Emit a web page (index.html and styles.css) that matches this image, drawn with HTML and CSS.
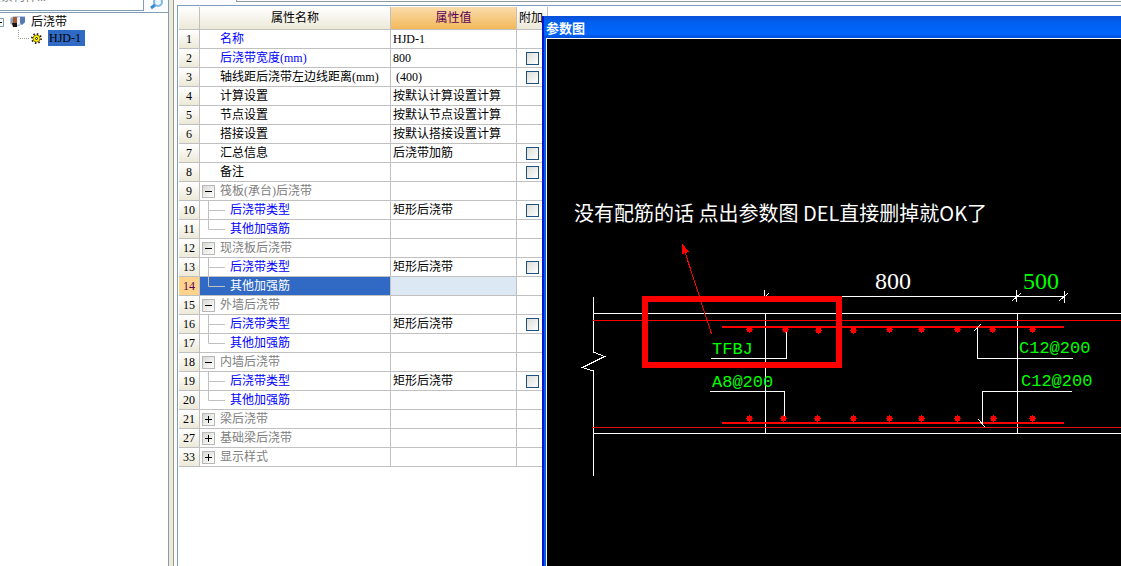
FILE: index.html
```html
<!DOCTYPE html>
<html lang="zh-CN">
<head>
<meta charset="utf-8">
<title>后浇带</title>
<link rel="stylesheet" href="styles.css">
</head>
<body>
<div class="app">
  <aside class="sidebar">
    <form class="search">
      <input class="search-box" type="text" aria-label="搜索构件" placeholder="搜索构件...">
      <button class="search-button" type="button" aria-label="搜索">
        <svg width="16" height="16" viewBox="0 0 16 16"><circle cx="10" cy="3" r="4" fill="#eaf5ff" stroke="#7db8e8" stroke-width="2"/><path d="M7 6L3 9" stroke="#3d8bd0" stroke-width="3"/></svg>
      </button>
    </form>
    <ul class="tree">
      <li class="tree-root">
        <svg width="4" height="9" viewBox="0 0 4 9"><path d="M0 .5H3.500V8.500H0" fill="#fff" stroke="#7f9db9"/><path d="M0 4.500H2" stroke="#000"/></svg>
        <svg class="folder" width="16" height="12" viewBox="0 0 16 12"><path d="M0 2L4 0H15V7L9 10L6 11L0 8Z" fill="#b9c6de"/><path d="M1 2L4 1V9L1 7Z" fill="#8fa0c4"/><path d="M3 1H7V8H3Z" fill="#a55a2c"/><path d="M7 2L10 1V8L7 9Z" fill="#f2f4fa"/><path d="M10 1H15V6L12 9L10 7Z" fill="#5878b4"/><path d="M2 7H7V11H3Z" fill="#1c1210"/></svg>
        <span>后浇带</span>
      </li>
      <li class="tree-leaf">
        <svg class="twig" width="11" height="19" viewBox="0 0 11 19"><path d="M.5 0V8.500H11" fill="none" stroke="#a8a48c" stroke-dasharray="1 1"/></svg>
        <svg class="gear" width="11" height="11" viewBox="0 0 11 11"><circle cx="5.500" cy="5.500" r="4.500" fill="none" stroke="#222" stroke-width="2" stroke-dasharray="1.500 2"/><circle cx="5.500" cy="5.500" r="3.500" fill="#ffee00" stroke="#8a7c00"/><circle cx="5.500" cy="5.500" r="1" fill="#fff" stroke="#222"/></svg>
        <span class="tree-selected">HJD-1</span>
      </li>
    </ul>
  </aside>
  <div class="splitter"></div>
  <main class="content">
    <div class="strip"></div>
    <section class="sheet">
      <table class="grid">
        <colgroup><col class="col-no"><col class="col-name"><col class="col-value"><col class="col-extra"></colgroup>
        <thead><tr><th></th><th>属性名称</th><th class="hot">属性值</th><th class="extra">附加</th></tr></thead>
        <tbody>
          <tr><th>1</th><td class="key blue">名称</td><td>HJD-1</td><td></td></tr>
          <tr><th>2</th><td class="key blue">后浇带宽度(mm)</td><td>800</td><td class="tick"><input type="checkbox" aria-label="后浇带宽度 附加"></td></tr>
          <tr><th>3</th><td class="key">轴线距后浇带左边线距离(mm)</td><td> (400)</td><td class="tick"><input type="checkbox" aria-label="左边线距离 附加"></td></tr>
          <tr><th>4</th><td class="key">计算设置</td><td>按默认计算设置计算</td><td></td></tr>
          <tr><th>5</th><td class="key">节点设置</td><td>按默认节点设置计算</td><td></td></tr>
          <tr><th>6</th><td class="key">搭接设置</td><td>按默认搭接设置计算</td><td></td></tr>
          <tr><th>7</th><td class="key">汇总信息</td><td>后浇带加筋</td><td class="tick"><input type="checkbox" aria-label="汇总信息 附加"></td></tr>
          <tr><th>8</th><td class="key">备注</td><td></td><td class="tick"><input type="checkbox" aria-label="备注 附加"></td></tr>
          <tr><th>9</th><td class="group"><div class="node"><button class="toggle" type="button" aria-label="折叠"></button><span>筏板(承台)后浇带</span></div></td><td></td><td></td></tr>
          <tr><th>10</th><td class="child"><div class="node"><svg width="17" height="18"><path d="M.5 0V18M0 9.500H17"/></svg><span>后浇带类型</span></div></td><td>矩形后浇带</td><td class="tick"><input type="checkbox" aria-label="筏板类型 附加"></td></tr>
          <tr><th>11</th><td class="child"><div class="node"><svg width="17" height="18"><path d="M.5 0V9.500H17"/></svg><span>其他加强筋</span></div></td><td></td><td></td></tr>
          <tr><th>12</th><td class="group"><div class="node"><button class="toggle" type="button" aria-label="折叠"></button><span>现浇板后浇带</span></div></td><td></td><td></td></tr>
          <tr><th>13</th><td class="child"><div class="node"><svg width="17" height="18"><path d="M.5 0V18M0 9.500H17"/></svg><span>后浇带类型</span></div></td><td>矩形后浇带</td><td class="tick"><input type="checkbox" aria-label="现浇板类型 附加"></td></tr>
          <tr class="selected"><th>14</th><td class="child"><div class="node"><svg width="17" height="18"><path d="M.5 0V9.500H17"/></svg><span>其他加强筋</span></div></td><td class="current"></td><td></td></tr>
          <tr><th>15</th><td class="group"><div class="node"><button class="toggle" type="button" aria-label="折叠"></button><span>外墙后浇带</span></div></td><td></td><td></td></tr>
          <tr><th>16</th><td class="child"><div class="node"><svg width="17" height="18"><path d="M.5 0V18M0 9.500H17"/></svg><span>后浇带类型</span></div></td><td>矩形后浇带</td><td class="tick"><input type="checkbox" aria-label="外墙类型 附加"></td></tr>
          <tr><th>17</th><td class="child"><div class="node"><svg width="17" height="18"><path d="M.5 0V9.500H17"/></svg><span>其他加强筋</span></div></td><td></td><td></td></tr>
          <tr><th>18</th><td class="group"><div class="node"><button class="toggle" type="button" aria-label="折叠"></button><span>内墙后浇带</span></div></td><td></td><td></td></tr>
          <tr><th>19</th><td class="child"><div class="node"><svg width="17" height="18"><path d="M.5 0V18M0 9.500H17"/></svg><span>后浇带类型</span></div></td><td>矩形后浇带</td><td class="tick"><input type="checkbox" aria-label="内墙类型 附加"></td></tr>
          <tr><th>20</th><td class="child"><div class="node"><svg width="17" height="18"><path d="M.5 0V9.500H17"/></svg><span>其他加强筋</span></div></td><td></td><td></td></tr>
          <tr><th>21</th><td class="group"><div class="node"><button class="toggle closed" type="button" aria-label="展开"></button><span>梁后浇带</span></div></td><td></td><td></td></tr>
          <tr><th>27</th><td class="group"><div class="node"><button class="toggle closed" type="button" aria-label="展开"></button><span>基础梁后浇带</span></div></td><td></td><td></td></tr>
          <tr><th>33</th><td class="group"><div class="node"><button class="toggle closed" type="button" aria-label="展开"></button><span>显示样式</span></div></td><td></td><td></td></tr>
        </tbody>
      </table>
    </section>
  </main>
  <section class="dialog">
    <h1 class="dialog-title">参数图</h1>
    <svg class="drawing" viewBox="547 39 574 527" preserveAspectRatio="xMinYMin slice">
      <defs>
        <path id="bar" d="M0 -3H1V-2H3V0H4V1H3V3H1V4H0V3H-2V1H-3V0H-2V-2H0Z" fill="#f00"/>
      </defs>
      <g class="white">
        <path d="M593.500 297V352L604.500 356.500L582.500 367.500L593.500 371V476"/>
        <path d="M594 313.500H1121M594 433.500H1121"/>
        <path d="M765.500 313V433M1017.500 313V433"/>
        <path d="M765 296.500H1064M764.500 290V300M765 297L769 293"/>
        <path d="M1016.500 290V302M1012 301L1021 293M1064.500 291V303M1059 301L1068 293"/>
      </g>
      <path d="M593 320.500H1121" stroke="#f00"/>
      <path d="M592 427.500H1121" stroke="#e01010"/>
      <path d="M722 327H1064M722 423H1064" stroke="#f00" stroke-width="2"/>
      <g>
        <use href="#bar" x="749" y="329"/><use href="#bar" x="785" y="329"/><use href="#bar" x="818" y="330"/><use href="#bar" x="853" y="330"/><use href="#bar" x="889" y="329"/><use href="#bar" x="921" y="329"/><use href="#bar" x="957" y="329"/><use href="#bar" x="992" y="329"/><use href="#bar" x="1032" y="329"/>
        <use href="#bar" x="749" y="418"/><use href="#bar" x="783" y="418"/><use href="#bar" x="817" y="418"/><use href="#bar" x="853" y="418"/><use href="#bar" x="889" y="418"/><use href="#bar" x="921" y="418"/><use href="#bar" x="957" y="418"/><use href="#bar" x="993" y="418"/><use href="#bar" x="1032" y="418"/>
      </g>
      <g class="white">
        <path d="M711 358.500H786.500V332M710 391.500H784.500V416"/>
        <path d="M1073 358.500H977.500V327M974 331L981 324"/>
        <path d="M1072 391.500H982.500V423M978 419L985 427"/>
      </g>
      <path d="M645 299H839V365H645Z" fill="none" stroke="#f00" stroke-width="6"/>
      <path d="M711.500 334L684 249" stroke="#f00"/>
      <path d="M682 243L689 252L682 254Z" fill="#f00"/>
      <text class="note" x="574" y="221">没有配筋的话 点出参数图 DEL直接删掉就OK了</text>
      <text class="size total" x="875" y="289">800</text>
      <text class="size" x="1023" y="289">500</text>
      <text class="tag" x="712" y="354">TFBJ</text>
      <text class="tag" x="712" y="387">A8@200</text>
      <text class="tag" x="1019" y="353">C12@200</text>
      <text class="tag" x="1021" y="386">C12@200</text>
    </svg>
  </section>
</div>
</body>
</html>
```

FILE: styles.css
```css
* { box-sizing: border-box; }

html, body { height: 100%; }

body {
  margin: 0;
  overflow: hidden;
  font: 12px/16px "Liberation Serif", "Noto Sans CJK SC", serif;
  color: #000;
  background: #fff;
}

.app {
  position: relative;
  display: flex;
  height: 100%;
}

.sidebar {
  display: flex;
  flex-direction: column;
  flex: none;
  width: 169px;
  border-right: 1px solid #7f9db9;
}

.search {
  display: flex;
  align-items: flex-end;
  flex: none;
  height: 11px;
  overflow: hidden;
  background: #fcfcfe;
}

.search-box {
  width: 156px;
  height: 24px;
  margin-left: -12px;
  padding: 0 0 4px;
  border: 1px solid #7f9db9;
  font: inherit;
}

.search-box::placeholder { color: #808080; }

.search-button {
  display: flex;
  height: 12px;
  margin: 0 0 0 4px;
  padding: 0;
  border: 0;
  background: none;
}

.tree {
  flex: 1;
  margin: 1px 0 0;
  padding: 1px 0 0;
  border-top: 1px solid #7f9db9;
  list-style: none;
}

.tree li {
  display: flex;
  align-items: center;
  height: 16px;
}

.folder { margin: 0 5px 0 6px; }

.tree-leaf { padding-left: 18px; }

.twig { align-self: flex-start; }

.gear { margin: 0 6px 0 2px; }

.tree-selected {
  padding: 0 4px 0 1px;
  background: #316ac5;
}

.splitter {
  flex: none;
  width: 5px;
  background: #ece9d8;
  border-right: 1px solid #9a9a92;
}

.content {
  display: flex;
  flex-direction: column;
  flex: 1;
  min-width: 0;
  padding-left: 3px;
  background: #fcfcfe;
}

.strip {
  flex: none;
  height: 2px;
  margin: 0 0 3px 59px;
  border: solid #8c9a9c;
  border-width: 0 0 1px 1px;
}

.sheet {
  flex: 1;
  padding: 1px 0 0 1px;
  border: solid #7f9db9;
  border-width: 1px 0 0 1px;
  background: #fff;
}

.grid {
  width: 369px;
  table-layout: fixed;
  border-collapse: separate;
  border-spacing: 0;
}

.col-no { width: 21px; }
.col-name { width: 191px; }
.col-value { width: 126px; }
.col-extra { width: 31px; }

.grid th,
.grid td {
  height: 19px;
  padding: 0 0 0 2px;
  border: solid #c0c0c0;
  border-width: 0 1px 1px 0;
  font-weight: normal;
  white-space: pre;
  line-height: 16px;
}

.grid th {
  padding: 0;
  text-align: center;
  background: linear-gradient(#fff, #ece9d8);
}

.grid thead th { height: 23px; }

.grid thead .hot {
  color: #580058;
  background: linear-gradient(#fbdcab, #f2b95a);
}

.grid thead .extra {
  padding-left: 2px;
  text-align: left;
}

.grid .key { padding-left: 20px; }
.grid .blue { color: #00f; }
.grid .group { padding-left: 2px; color: #808080; }
.grid .child { padding-left: 8px; color: #00f; }

.node {
  display: flex;
  align-items: center;
  gap: 5px;
  height: 18px;
}

.child svg {
  fill: none;
  stroke: #c0c0c0;
}

.toggle {
  width: 13px;
  height: 13px;
  padding: 0;
  border: 1px solid #b8b8b8;
  background:
    linear-gradient(#000, #000) center / 7px 1px no-repeat,
    linear-gradient(135deg, #d8d8d4, #fff);
}

.toggle.closed {
  background:
    linear-gradient(#000, #000) center / 7px 1px no-repeat,
    linear-gradient(#000, #000) center / 1px 7px no-repeat,
    linear-gradient(135deg, #d8d8d4, #fff);
}

.grid .tick {
  padding: 0 0 0 1px;
  text-align: center;
  line-height: 0;
}

.tick input {
  appearance: none;
  width: 13px;
  height: 13px;
  margin: 0;
  border: 1px solid #1c5180;
  background: linear-gradient(135deg, #dcdcd7, #fff);
  vertical-align: middle;
}

.grid .selected th { color: #580058; background: #ffd38c; }
.grid .selected .child { color: #fff; background: #316ac5; }
.grid .selected .current { background: #dde8f5; }

.dialog {
  position: absolute;
  inset: 16px 0 0 542px;
  display: flex;
  flex-direction: column;
  padding-left: 4px;
  background: linear-gradient(90deg, #0019cf 0 2px, #0a5bea 2px 4px, #0a5bea 4px);
}

.dialog-title {
  flex: none;
  height: 22px;
  margin: 0 0 0 -2px;
  padding: 4px 0 0 2px;
  font: bold 13px/16px "Noto Sans CJK SC", sans-serif;
  color: #fff;
  background: linear-gradient(#0a4fd8, #0060f0 30%, #0066ff 80%, #0050d8);
}

.drawing {
  flex: 1;
  min-height: 0;
  width: 100%;
  border: solid #fff;
  border-width: 1px 0 0 1px;
  background: #000;
  shape-rendering: crispEdges;
}

.white { fill: none; stroke: #fff; }

.note {
  font: 20px "Noto Sans CJK SC", sans-serif;
  fill: #fff;
}

.size {
  font: 24px "Liberation Serif", serif;
  fill: #0f0;
}

.total { fill: #fff; }

.tag {
  font: 17px "Liberation Mono", monospace;
  fill: #0f0;
}
```
